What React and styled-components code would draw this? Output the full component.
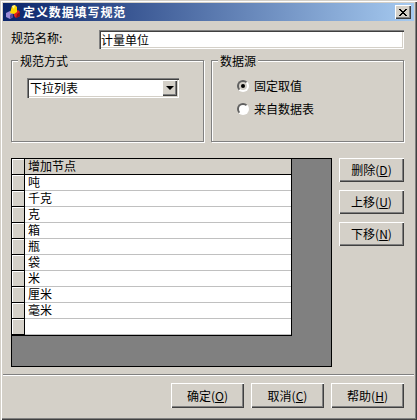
import React from "react";
import styled, { createGlobalStyle } from "styled-components";

const FONT = `"Noto Sans CJK SC", "Liberation Sans", sans-serif`;
const FACE = "#d4d0c8";

const GlobalStyle = createGlobalStyle`
  html, body {
    margin: 0;
    padding: 0;
    background: ${FACE};
  }
  * {
    box-sizing: border-box;
  }
`;

const Window = styled.div`
  background: ${FACE};
  box-shadow: inset 1px 1px 0 ${FACE}, inset 2px 2px 0 #fff, inset -1px -1px 0 #404040, inset -2px -2px 0 #808080;
  color: #000;
  display: flex;
  flex-direction: column;
  font-family: ${FONT};
  font-size: 12px;
  height: 420px;
  line-height: 14px;
  padding: 3px;
  width: 417px;
`;

const TitleBar = styled.div`
  align-items: center;
  background: linear-gradient(90deg, #0a246a, #a6caf0);
  color: #fff;
  display: flex;
  font-size: 12px;
  font-weight: 700;
  height: 18px;
  letter-spacing: 0.9px;
  padding: 0 3px 0 2px;
`;

const TitleText = styled.span`
  flex: 1;
  margin-left: 2px;
`;

const raised = `
  background: ${FACE};
  border: 0;
  box-shadow: inset 1px 1px 0 #fff, inset -1px -1px 0 #404040, inset -2px -2px 0 #808080;
`;

const sunken = `
  box-shadow: inset 1px 1px 0 #808080, inset 2px 2px 0 #404040, inset -1px -1px 0 #fff, inset -2px -2px 0 ${FACE};
`;

const CloseButton = styled.div`
  ${raised}
  align-items: center;
  display: flex;
  height: 14px;
  justify-content: center;
  width: 16px;
`;

const Content = styled.div`
  display: flex;
  flex-direction: column;
  padding: 9px 10px 0 8px;
`;

const NameRow = styled.div`
  align-items: center;
  display: flex;
  height: 18px;
`;

const NameLabel = styled.span`
  margin-top: -3px;
  width: 88px;
`;

const NameInput = styled.div`
  ${sunken}
  background: #fff;
  flex: 1;
  height: 19px;
  padding: 3px 0 0 2px;
`;

const Groups = styled.div`
  display: flex;
  gap: 7px;
  margin-top: 12px;
`;

const Group = styled.div`
  border: 1px solid #808080;
  box-shadow: inset 1px 1px 0 #fff, 1px 1px 0 #fff;
  height: 82px;
  position: relative;
  width: 193px;
`;

const Legend = styled.span`
  background: ${FACE};
  left: 6px;
  padding: 0 2px;
  position: absolute;
  top: -7px;
`;

const GroupBody = styled.div`
  display: flex;
  flex-direction: column;
  padding: ${(p) => p.$padding};
`;

const Combo = styled.div`
  ${sunken}
  align-items: center;
  background: #fff;
  display: flex;
  height: 20px;
  justify-content: space-between;
  padding: 2px 2px 2px 3px;
  width: 152px;
`;

const ComboArrow = styled.div`
  ${raised}
  align-items: center;
  display: flex;
  height: 16px;
  justify-content: center;
  width: 15px;
`;

const RadioRow = styled.div`
  align-items: center;
  display: flex;
  gap: 5px;
  height: 23px;
`;

const RadioCircle = styled.div`
  align-items: center;
  background: ${(p) => (p.$checked ? FACE : "#fff")};
  border: 2px solid;
  border-color: #606060 #fff #fff #606060;
  border-radius: 50%;
  display: flex;
  height: 12px;
  justify-content: center;
  width: 12px;
`;

const RadioDot = styled.div`
  background: #000;
  border-radius: 50%;
  height: 4px;
  width: 4px;
`;

const Middle = styled.div`
  display: flex;
  gap: 7px;
  margin-top: 16px;
`;

const GridFrame = styled.div`
  background: #808080;
  border: 1px solid #000;
  height: 209px;
  width: 321px;
`;

const Table = styled.div`
  background: #fff;
  border-bottom: 1px solid #000;
  border-right: 1px solid #000;
  display: flex;
  flex-direction: column;
  width: 280px;
`;

const Row = styled.div`
  display: flex;
  height: 16px;
`;

const RowMark = styled.div`
  background: ${FACE};
  border-bottom: 1px solid #000;
  border-right: 1px solid #000;
  box-shadow: inset 1px 1px 0 #fff;
  flex: none;
  width: 13px;
`;

const Cell = styled.div`
  background: ${(p) => (p.$header ? FACE : "#fff")};
  border-bottom: 1px solid ${(p) => (p.$header ? "#000" : "#c0c0c0")};
  flex: 1;
  padding-left: 3px;
`;

const SideButtons = styled.div`
  display: flex;
  flex-direction: column;
  gap: 8px;
`;

const Button = styled.button`
  ${raised}
  color: #000;
  font-family: ${FONT};
  font-size: 12px;
  height: ${(p) => p.$height}px;
  line-height: 14px;
  padding: 0;
  width: ${(p) => p.$width}px;

  u {
    text-underline-offset: 1px;
  }
`;

const Divider = styled.div`
  border-bottom: 1px solid #fff;
  border-top: 1px solid #808080;
  height: 2px;
  margin-top: 7px;
`;

const Footer = styled.div`
  display: flex;
  gap: 7px;
  justify-content: flex-end;
  margin-top: 7px;
  padding-right: 10px;
`;

const units = ["吨", "千克", "克", "箱", "瓶", "袋", "米", "厘米", "毫米", ""];

function AppIcon() {
  return (
    <svg width="16" height="16" viewBox="0 0 16 16">
      <polygon points="1,9 5,7 8,9 8,13 5,15 1,13" fill="#9c8cd8" />
      <polygon points="5,11 8,9 8,13 5,15" fill="#5a4a9c" />
      <polygon points="9,8 13,6 15,8 15,12 11,14 9,12" fill="#e02020" />
      <polygon points="12,10 15,8 15,12 11,14" fill="#901010" />
      <polygon points="5,9 7,2 10,1 12,3 12,8 9,10" fill="#ffd800" />
      <polygon points="7,2 10,1 9,5" fill="#fff3a0" />
    </svg>
  );
}

function CloseIcon() {
  return (
    <svg width="8" height="7" viewBox="0 0 8 7">
      <path d="M0 0h2v1h1v1h2V1h1V0h2v1H7v1H6v1H5v1h1v1h1v1h1v1H6V6H5V5H3v1H2v1H0V6h1V5h1V4h1V3H2V2H1V1H0z" fill="#000" />
    </svg>
  );
}

function ArrowIcon() {
  return (
    <svg width="8" height="4" viewBox="0 0 8 4">
      <polygon points="0,0 8,0 4,4" fill="#000" />
    </svg>
  );
}

function Radio({ checked, children }) {
  return (
    <RadioRow>
      <RadioCircle $checked={checked}>{checked && <RadioDot />}</RadioCircle>
      <span>{children}</span>
    </RadioRow>
  );
}

export default function App() {
  return (
    <>
      <GlobalStyle />
      <Window>
        <TitleBar>
          <AppIcon />
          <TitleText>定义数据填写规范</TitleText>
          <CloseButton>
            <CloseIcon />
          </CloseButton>
        </TitleBar>
        <Content>
          <NameRow>
            <NameLabel>规范名称:</NameLabel>
            <NameInput>计量单位</NameInput>
          </NameRow>
          <Groups>
            <Group>
              <Legend>规范方式</Legend>
              <GroupBody $padding="17px 0 0 15px">
                <Combo>
                  下拉列表
                  <ComboArrow>
                    <ArrowIcon />
                  </ComboArrow>
                </Combo>
              </GroupBody>
            </Group>
            <Group>
              <Legend>数据源</Legend>
              <GroupBody $padding="13px 0 0 25px">
                <Radio checked>固定取值</Radio>
                <Radio>来自数据表</Radio>
              </GroupBody>
            </Group>
          </Groups>
          <Middle>
            <GridFrame>
              <Table>
                <Row>
                  <RowMark />
                  <Cell $header>增加节点</Cell>
                </Row>
                {units.map((unit, i) => (
                  <Row key={i}>
                    <RowMark />
                    <Cell>{unit}</Cell>
                  </Row>
                ))}
              </Table>
            </GridFrame>
            <SideButtons>
              <Button $width={65} $height={24}>删除(<u>D</u>)</Button>
              <Button $width={65} $height={24}>上移(<u>U</u>)</Button>
              <Button $width={65} $height={24}>下移(<u>N</u>)</Button>
            </SideButtons>
          </Middle>
        </Content>
        <Divider />
        <Footer>
          <Button $width={73} $height={25}>确定(<u>O</u>)</Button>
          <Button $width={73} $height={25}>取消(<u>C</u>)</Button>
          <Button $width={73} $height={25}>帮助(<u>H</u>)</Button>
        </Footer>
      </Window>
    </>
  );
}
